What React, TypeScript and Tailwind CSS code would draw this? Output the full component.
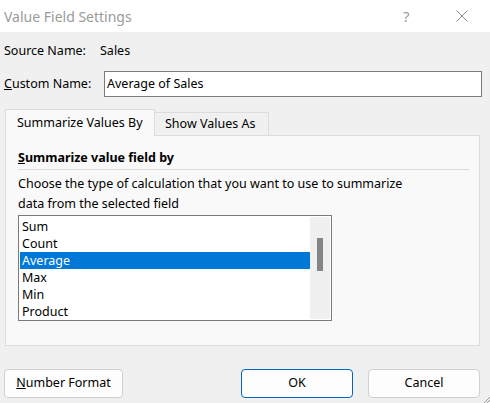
import React from 'react';

const items = ['Sum', 'Count', 'Average', 'Max', 'Min', 'Product'];

const App: React.FC = () => {
  return (
    <div
      className="w-[490px] h-[403px] bg-[#f0f0f0] text-[12.5px] text-black flex flex-col overflow-hidden relative"
      style={{ fontFamily: '"Segoe UI", "Noto Sans", "Open Sans", sans-serif' }}
    >
      {/* title bar */}
      <div className="h-[32px] bg-white flex items-center pl-[4px] shrink-0">
        <span className="text-[14px] text-[#9a9a9a] flex-1">Value Field Settings</span>
        <span className="text-[15px] text-[#9a9a9a] w-[16px] mr-[37px]">?</span>
        <svg className="w-[12px] h-[12px] mr-[22px]" viewBox="0 0 12 12" fill="none" stroke="#8a8a8a" strokeWidth="1">
          <path d="M0.5 0.5 L11.5 11.5 M11.5 0.5 L0.5 11.5" />
        </svg>
      </div>

      <div className="flex items-center h-[22px] mt-[8px] pl-[4px]">
        <span className="w-[96px]">Source Name:</span>
        <span>Sales</span>
      </div>

      <div className="flex items-center mt-[9px] pl-[4px]">
        <span className="w-[100px]">
          <span className="underline">C</span>ustom Name:
        </span>
        <div className="w-[378px] h-[26px] bg-white border border-[#7a7a7a] flex items-center pl-[2px]">
          Average of Sales
        </div>
      </div>

      {/* tabs */}
      <div className="flex items-end mt-[12px] pl-[5px] h-[27px]">
        <div className="w-[150px] h-[27px] bg-[#f9f9f9] border border-b-0 border-[#dcdcdc] flex items-center pl-[11px] relative z-10">
          Summarize Values By
        </div>
        <div className="w-[114px] h-[24px] bg-[#f0f0f0] border border-l-0 border-[#dcdcdc] flex items-center pl-[10px]">
          Show Values As
        </div>
      </div>

      <div className="ml-[5px] w-[475px] h-[211px] -mt-px bg-[#f9f9f9] border border-[#dcdcdc] pl-[12px] pt-[12px]">
        <div className="font-bold leading-[20px]">
          <span className="underline">S</span>ummarize value field by
        </div>
        <div className="w-[451px] h-px bg-[#dcdcdc] mt-[1px]" />
        <div className="mt-[4px] leading-[20px]">
          Choose the type of calculation that you want to use to summarize
          <br />
          data from the selected field
        </div>
        <div className="w-[314px] h-[106px] mt-[1px] bg-white border border-[#7a7a7a] flex p-px">
          <div className="flex-1 pt-[1px]">
            {items.map((it) => (
              <div
                key={it}
                className={`h-[17px] leading-[17px] pl-[2px] ${it === 'Average' ? 'bg-[#0078d7] text-white' : ''}`}
              >
                {it}
              </div>
            ))}
          </div>
          <div className="w-[20px] bg-[#f0f0f0] flex justify-center pt-[21px]">
            <div className="w-[6px] h-[33px] bg-[#858585]" />
          </div>
        </div>
      </div>

      {/* buttons */}
      <div className="flex mt-[23px] pl-[4px]">
        <button className="w-[119px] h-[29px] bg-[#fdfdfd] border border-[#d0d0d0] rounded-[4px] text-[12.5px]">
          <span className="underline">N</span>umber Format
        </button>
        <button className="w-[112px] h-[29px] ml-[118px] bg-[#fdfdfd] border border-[#0067c0] rounded-[4px] text-[12.5px]">
          OK
        </button>
        <button className="w-[112px] h-[29px] ml-[15px] bg-[#fdfdfd] border border-[#d0d0d0] rounded-[4px] text-[12.5px]">
          Cancel
        </button>
      </div>

      {/* resize grip */}
      <svg className="absolute right-0 bottom-0 w-[8px] h-[8px]" viewBox="0 0 8 8" stroke="#9a9a9a" strokeWidth="1">
        <path d="M8 2 L2 8 M8 5 L5 8" />
      </svg>
    </div>
  );
};

export default App;
